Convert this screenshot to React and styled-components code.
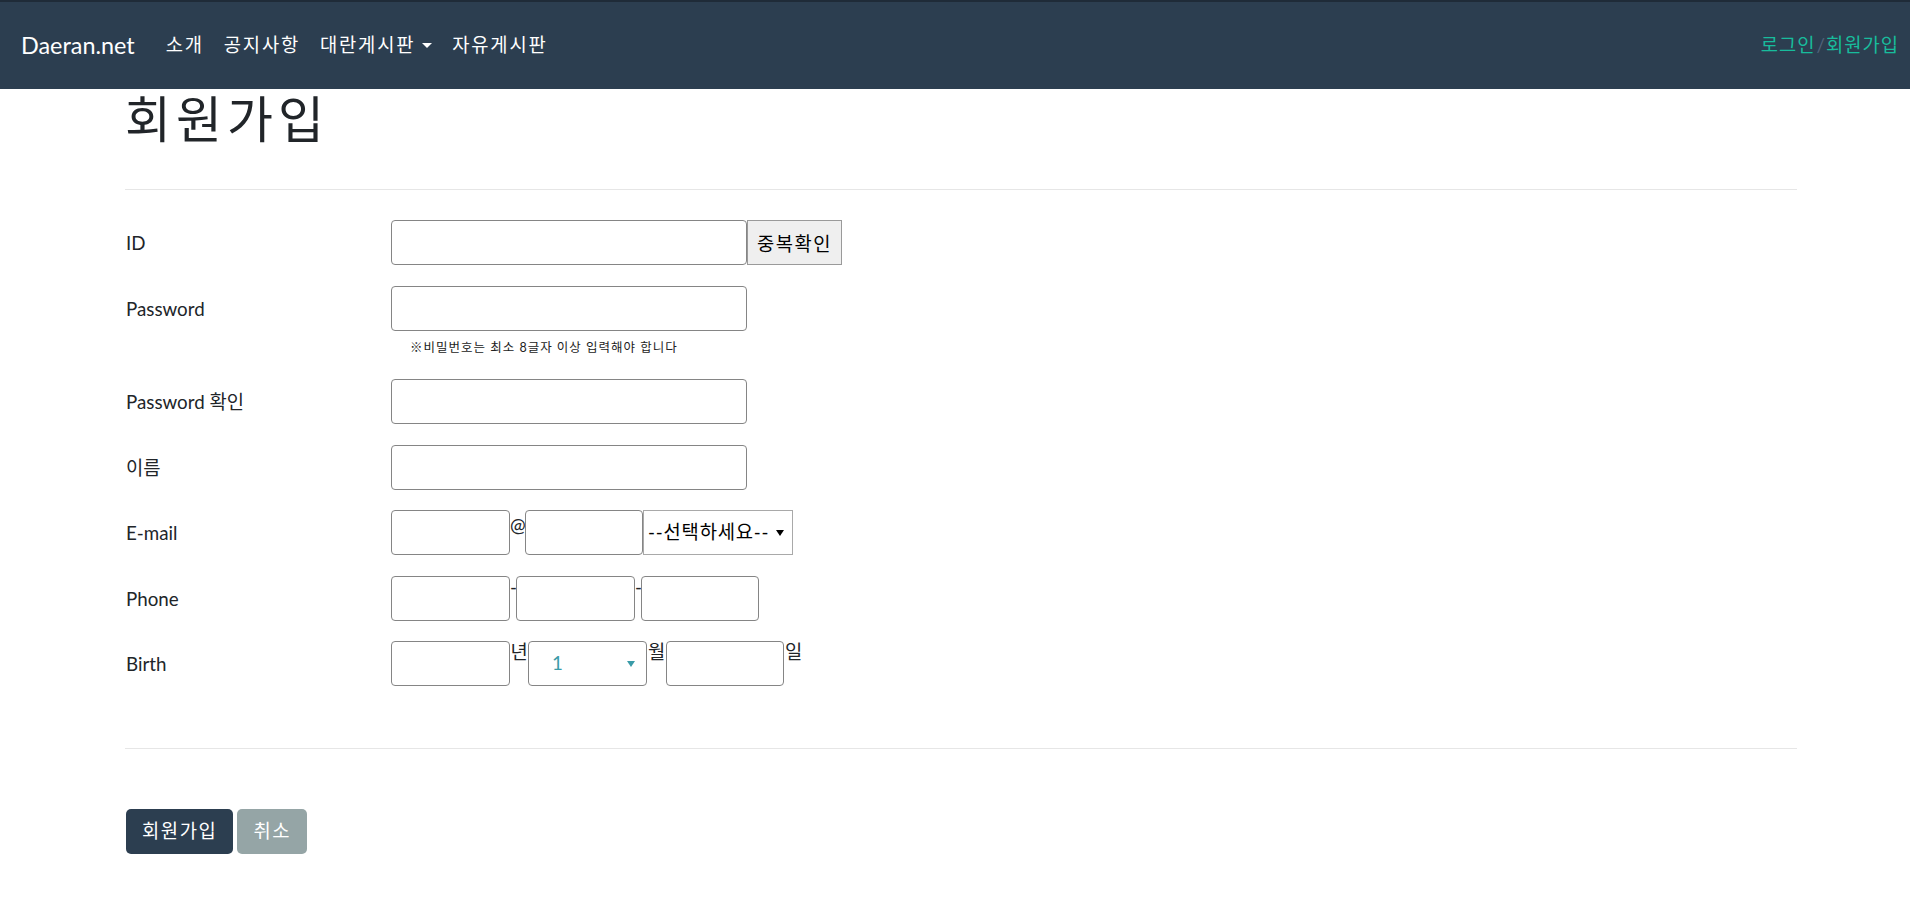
import React from "react";
import styled, { createGlobalStyle } from "styled-components";

const GlobalStyle = createGlobalStyle`
  body {
    margin: 0;
    background: #fff;
    color: #212529;
    font-family: Lato, "Noto Sans CJK KR", sans-serif;
    font-size: 18.75px;
    line-height: 1.5;
  }
`;

const Navbar = styled.nav`
  height: 89px;
  box-sizing: border-box;
  border-top: 2px solid #1f2b38;
  background: #2c3e50;
  display: flex;
  align-items: center;
  padding: 0 11px 0 21px;
`;

const Brand = styled.a`
  color: #fff;
  font-size: 23.4px;
  margin-right: 31px;
  text-decoration: none;
`;

const NavLinks = styled.div`
  display: flex;
  align-items: center;
  gap: 20px;
`;

const NavLink = styled.a`
  color: ${(p) => (p.$accent ? "#18bc9c" : "#fff")};
  text-decoration: none;
  letter-spacing: ${(p) => (p.$accent ? "1px" : "1.8px")};
  display: flex;
  align-items: center;
`;

const Slash = styled.span`
  color: #52637a;
  padding: 0 1px;
`;

const Caret = styled.span`
  display: inline-block;
  margin-left: 7px;
  border-top: 5.6px solid #fff;
  border-left: 5.6px solid transparent;
  border-right: 5.6px solid transparent;
`;

const AuthLinks = styled.div`
  margin-left: auto;
  display: flex;
  align-items: center;
`;

const Main = styled.main`
  padding: 0 113px 0 125px;
`;

const Title = styled.h1`
  margin: 0;
  font-size: 50px;
  font-weight: 400;
  line-height: 1.2;
  letter-spacing: 5px;
`;

const Divider = styled.hr`
  border: 0;
  border-top: 1px solid #e6e6e6;
  margin: ${(p) => p.$margin};
`;

const Form = styled.form`
  display: flex;
  flex-direction: column;
  gap: 20.5px;
`;

const Row = styled.div`
  display: grid;
  grid-template-columns: 266px 1fr;
  align-items: start;
`;

const Label = styled.label`
  line-height: 45px;
  padding-left: 1px;
`;

const Field = styled.div`
  display: flex;
  flex-direction: column;
`;

const Inline = styled.div`
  display: flex;
  align-items: flex-start;
`;

const Input = styled.input`
  box-sizing: border-box;
  width: ${(p) => p.$w}px;
  height: 45px;
  border: 1px solid #858585;
  border-radius: 4px;
  background: #fff;
  font: inherit;
  padding: 0 6px;
  outline: none;
`;

const CheckButton = styled.button`
  box-sizing: border-box;
  width: 95px;
  height: 45px;
  border: 1px solid #9a9a9a;
  border-radius: 0;
  background: #efefef;
  color: #000;
  font-family: "Noto Sans CJK KR", sans-serif;
  font-size: 18.75px;
  letter-spacing: 1.5px;
  padding: 0;
`;

const Hint = styled.div`
  font-size: 12.5px;
  line-height: 17px;
  letter-spacing: 1px;
  padding: 8px 0 3px 19px;
  color: #222;
`;

const Sep = styled.span`
  width: ${(p) => p.$w}px;
  line-height: 1.2;
  padding-top: ${(p) => p.$top || 0}px;
  text-align: center;
  flex-shrink: 0;
`;

const SelectBox = styled.div`
  box-sizing: border-box;
  width: ${(p) => p.$w}px;
  height: 45px;
  display: flex;
  align-items: center;
  border: 1px solid ${(p) => (p.$rounded ? "#858585" : "#a9a9a9")};
  border-radius: ${(p) => (p.$rounded ? "4px" : "0")};
  background: #fff;
  padding-right: ${(p) => (p.$rounded ? 11 : 8)}px;
`;

const Select = styled.select`
  flex: 1;
  min-width: 0;
  appearance: none;
  border: 0;
  outline: none;
  background: transparent;
  font: inherit;
  letter-spacing: 0.8px;
  color: ${(p) => p.$color || "#000"};
  padding: 0 0 0 ${(p) => p.$pad || 4}px;
`;

const Arrow = styled.span`
  border-top: 6px solid ${(p) => p.$color || "#000"};
  border-left: 4px solid transparent;
  border-right: 4px solid transparent;
`;

const Buttons = styled.div`
  display: flex;
  gap: 4px;
  padding-left: 1px;
`;

const Button = styled.button`
  height: 45px;
  padding: 0 16px;
  border: 0;
  border-radius: 5px;
  background: ${(p) => (p.$secondary ? "#95a5a6" : "#2c3e50")};
  color: #fff;
  font: inherit;
  letter-spacing: 1.6px;
`;

export default function App() {
  return (
    <>
      <GlobalStyle />
      <Navbar>
        <Brand href="#">Daeran.net</Brand>
        <NavLinks>
          <NavLink href="#">소개</NavLink>
          <NavLink href="#">공지사항</NavLink>
          <NavLink href="#">
            대란게시판
            <Caret />
          </NavLink>
          <NavLink href="#">자유게시판</NavLink>
        </NavLinks>
        <AuthLinks>
          <NavLink $accent href="#">로그인</NavLink>
          <Slash>/</Slash>
          <NavLink $accent href="#">회원가입</NavLink>
        </AuthLinks>
      </Navbar>

      <Main>
        <Title>회원가입</Title>
        <Divider $margin="40px 0 30px" />

        <Form>
          <Row>
            <Label>ID</Label>
            <Inline>
              <Input $w={356} />
              <CheckButton type="button">중복확인</CheckButton>
            </Inline>
          </Row>

          <Row>
            <Label>Password</Label>
            <Field>
              <Input $w={356} type="password" />
              <Hint>※비밀번호는 최소 8글자 이상 입력해야 합니다</Hint>
            </Field>
          </Row>

          <Row>
            <Label>Password 확인</Label>
            <Inline>
              <Input $w={356} type="password" />
            </Inline>
          </Row>

          <Row>
            <Label>이름</Label>
            <Inline>
              <Input $w={356} />
            </Inline>
          </Row>

          <Row>
            <Label>E-mail</Label>
            <Inline>
              <Input $w={119} />
              <Sep $w={15} $top={4}>@</Sep>
              <Input $w={118} />
              <SelectBox $w={150}>
                <Select>
                  <option>--선택하세요--</option>
                </Select>
                <Arrow />
              </SelectBox>
            </Inline>
          </Row>

          <Row>
            <Label>Phone</Label>
            <Inline>
              <Input $w={119} />
              <Sep $w={6}>-</Sep>
              <Input $w={119} />
              <Sep $w={6}>-</Sep>
              <Input $w={118} />
            </Inline>
          </Row>

          <Row>
            <Label>Birth</Label>
            <Inline>
              <Input $w={119} />
              <Sep $w={18}>년</Sep>
              <SelectBox $w={119} $rounded>
                <Select $color="#3a9ba8" $pad={23}>
                  <option>1</option>
                </Select>
                <Arrow $color="#3a9ba8" />
              </SelectBox>
              <Sep $w={19}>월</Sep>
              <Input $w={118} />
              <Sep $w={19}>일</Sep>
            </Inline>
          </Row>
        </Form>

        <Divider $margin="62px 0 60px" />

        <Buttons>
          <Button type="button">회원가입</Button>
          <Button type="button" $secondary>
            취소
          </Button>
        </Buttons>
      </Main>
    </>
  );
}
